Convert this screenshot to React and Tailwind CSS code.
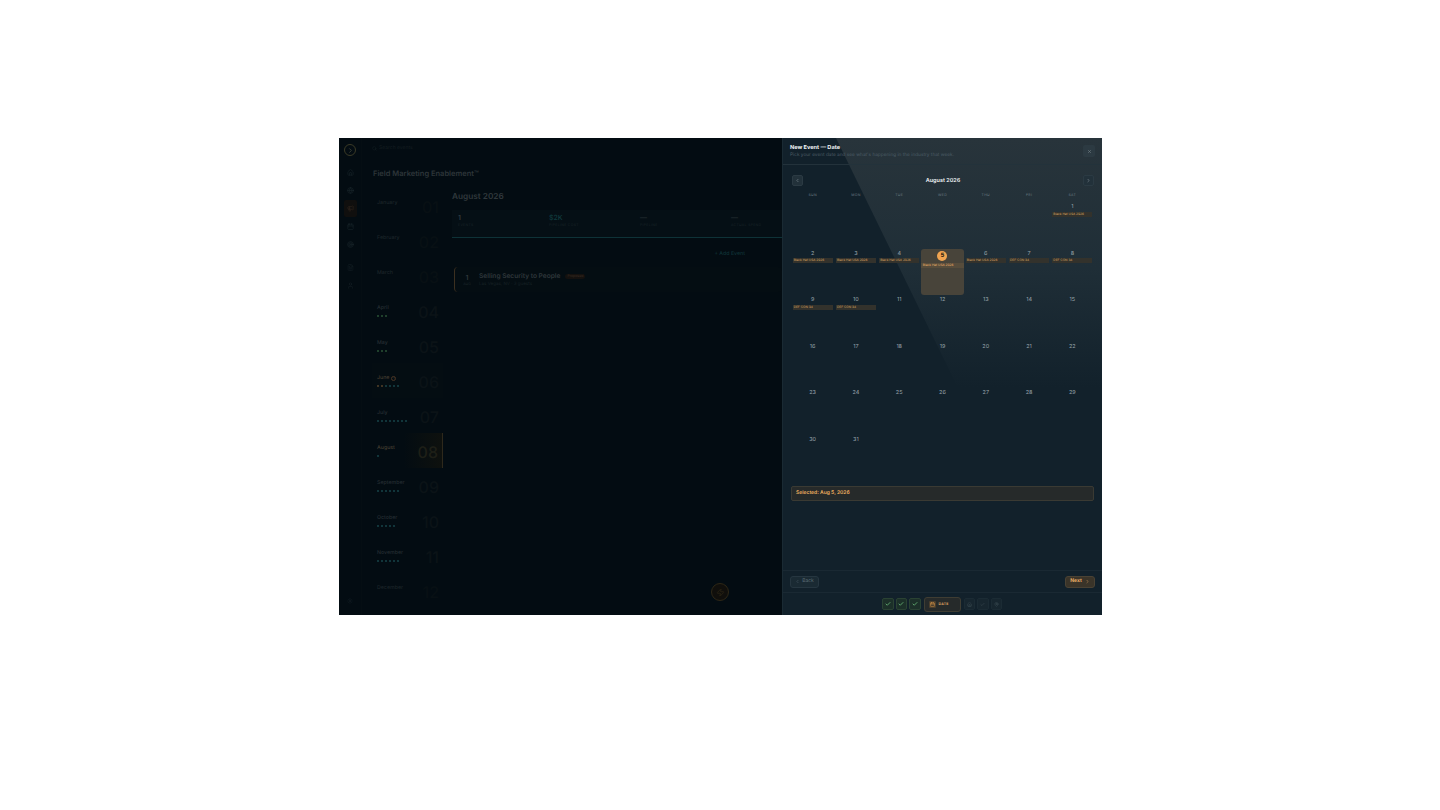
import React from 'react';
import { Search, Home, Globe, Megaphone, Calendar, Target, FileText, Settings, User, ChevronLeft, ChevronRight, X, Check, Zap, MapPin } from 'lucide-react';

const head = { fontFamily: 'Inter, "Liberation Sans", sans-serif' };

const months = [
  { n: 'January', d: '01', dots: [], dim: true },
  { n: 'February', d: '02', dots: [], dim: true },
  { n: 'March', d: '03', dots: [], dim: true },
  { n: 'April', d: '04', dots: ['g', 'g', 'g'] },
  { n: 'May', d: '05', dots: ['g', 'g', 'g'] },
  { n: 'June', d: '06', dots: ['o', 'o', 't', 't', 't', 't'], badge: true },
  { n: 'July', d: '07', dots: ['t', 't', 't', 't', 't', 't', 't', 't'] },
  { n: 'August', d: '08', dots: ['t'], active: true },
  { n: 'September', d: '09', dots: ['t', 't', 't', 't', 't', 't'] },
  { n: 'October', d: '10', dots: ['t', 't', 't', 't', 't'] },
  { n: 'November', d: '11', dots: ['t', 't', 't', 't', 't', 't'] },
  { n: 'December', d: '12', dots: [], dim: true },
];

const dotClass = { g: 'bg-[#2a5236]', o: 'bg-[#54422a]', t: 'bg-[#174349]' };

const railTop = [Home, Globe, Megaphone, Calendar, Target];
const railLow = [FileText, User];

function Rail() {
  return (
    <div className="w-[23px] shrink-0 flex flex-col items-center pt-[6px] border-r border-[#050e13]">
      <div className="w-[12px] h-[12px] rounded-full border border-[#3a3a26] flex items-center justify-center">
        <ChevronRight size={7} strokeWidth={3} className="text-[#3d4238]" />
      </div>
      <div className="flex flex-col items-center gap-[1px] mt-[8px]">
        {railTop.map((I, i) => (
          <div key={i} className={`w-[13px] h-[17px] flex items-center justify-center rounded-[2px] ${i === 2 ? 'bg-[#100f0e]' : ''}`}>
            <I size={7} className={i === 2 ? 'text-[#33281f]' : 'text-[#1a262b]'} />
          </div>
        ))}
      </div>
      <div className="flex flex-col items-center gap-[1px] mt-[6px]">
        {railLow.map((I, i) => (
          <div key={i} className="w-[13px] h-[17px] flex items-center justify-center">
            <I size={7} className="text-[#162126]" />
          </div>
        ))}
      </div>
      <div className="mt-auto mb-[11px]">
        <Settings size={6} className="text-[#162126]" />
      </div>
    </div>
  );
}

function MonthRow({ m }) {
  return (
    <div className={`h-[35px] shrink-0 relative flex items-start justify-between pl-[5px] pr-[4px] ${m.active ? 'bg-[linear-gradient(90deg,#030c12_45%,#0e110e)] border-r border-[#2e291c]' : ''} ${m.badge ? 'bg-[#040d12]' : ''}`}>
      <div className="flex flex-col gap-[3px] pt-[12px]">
        <div className={`text-[5.25px] leading-[7px] font-medium flex items-center gap-[2px] ${m.active || m.badge ? 'text-[#443d31]' : m.dim ? 'text-[#1c2529]' : 'text-[#262e32]'}`}>
          {m.n}
          {m.badge && <span className="w-[5px] h-[5px] rounded-full border border-[#4a3525] text-[3px] leading-[3px] flex items-center justify-center">1</span>}
        </div>
        {m.dots.length > 0 && (
          <div className="flex gap-[2px] h-[2px]">
            {m.dots.map((c, i) => <span key={i} className={`w-[2px] h-[2px] rounded-full ${dotClass[c]}`} />)}
          </div>
        )}
      </div>
      <div className={`text-[16px] leading-[16px] pt-[11px] box-content font-medium ${m.active ? 'text-[#1e1f17]' : m.dim ? 'text-[#081014]' : 'text-[#0b1317]'}`}>{m.d}</div>
    </div>
  );
}

const stats = [
  { v: '1', l: 'EVENTS', c: 'text-[#3a4246]' },
  { v: '$2K', l: 'PIPELINE COST', c: 'text-[#103b3e]' },
  { v: '—', l: 'PIPELINE', c: 'text-[#2a3438]' },
  { v: '—', l: 'ACTUAL SPEND', c: 'text-[#2a3438]' },
];

function Background() {
  return (
    <div className="flex-1 min-w-0 flex flex-col">
      <div className="h-[20px] shrink-0 flex items-center gap-[2px] pl-[10px] pt-[1px]">
        <Search size={5} className="text-[#172125]" />
        <span className="text-[5px] text-[#131c20]">Search events</span>
      </div>
      <div className="text-[7.5px] leading-[10px] font-semibold text-[#2d3539] pl-[11px] mt-[11px]">Field Marketing Enablement™</div>
      <div className="flex flex-1 min-h-0 mt-[9px]">
        <div className="w-[81px] shrink-0 overflow-hidden">
          <div className="flex flex-col pl-[10px]">
            {months.map(m => <MonthRow key={m.n} m={m} />)}
          </div>
        </div>
        <div className="flex-1 min-w-0 pl-[9px] flex flex-col">
          <div className="text-[8.25px] leading-[11px] font-semibold text-[#30383c] mt-[3px]">August 2026</div>
          <div className="mt-[8px] h-[28px] w-[370px] shrink-0 grid grid-cols-4 bg-[#050f15] border-b border-[#0e3237] pl-[6px]">
            {stats.map(s => (
              <div key={s.l} className="pt-[3px]">
                <div className={`text-[7px] leading-[9px] font-medium ${s.c}`}>{s.v}</div>
                <div className="text-[3.5px] leading-[5px] mt-[1px] tracking-[0.3px] text-[#192428]">{s.l}</div>
              </div>
            ))}
          </div>
          <div className="flex justify-end mt-[13px] pr-[37px] text-[5.25px] leading-[7px] font-medium text-[#0f3337]">+ Add Event</div>
          <div className="mt-[9px] ml-[2px] h-[25px] shrink-0 flex items-center rounded-[4px] border-l border-[#3c3020] bg-[#040d12]">
            <div className="w-[24px] shrink-0 flex flex-col items-center">
              <div className="text-[7px] leading-[9px] font-semibold text-[#30383c]">1</div>
              <div className="text-[3.5px] leading-[5px] text-[#1c262a]">AUG</div>
            </div>
            <div>
              <div className="flex items-center gap-[5px]">
                <span className="text-[6.6px] leading-[9px] font-semibold text-[#2e363a]">Selling Security to People</span>
                <span className="text-[3.5px] leading-[5px] px-[2px] rounded-full bg-[#14110f] text-[#3c2d22]">Proposed</span>
              </div>
              <div className="text-[4.5px] leading-[7px] text-[#172125]">Las Vegas, NV · 3 guests</div>
            </div>
          </div>
          <div className="mt-auto mb-[14px] ml-[259px] w-[18px] h-[18px] rounded-full border border-[#2e2716] bg-[#100f0c] flex items-center justify-center">
            <Zap size={9} className="text-[#2e2716]" />
          </div>
        </div>
      </div>
    </div>
  );
}

const blackHat = 'Black Hat USA 2026';
const defcon = 'DEF CON 34';
const weeks = [
  [null, null, null, null, null, null, { d: 1, e: blackHat }],
  [{ d: 2, e: blackHat }, { d: 3, e: blackHat }, { d: 4, e: blackHat }, { d: 5, e: blackHat, s: true }, { d: 6, e: blackHat }, { d: 7, e: defcon }, { d: 8, e: defcon }],
  [{ d: 9, e: defcon }, { d: 10, e: defcon }, { d: 11 }, { d: 12 }, { d: 13 }, { d: 14 }, { d: 15 }],
  [16, 17, 18, 19, 20, 21, 22].map(d => ({ d })),
  [23, 24, 25, 26, 27, 28, 29].map(d => ({ d })),
  [{ d: 30 }, { d: 31 }, null, null, null, null, null],
];

function Cell({ c }) {
  if (!c) return <div />;
  if (c.s) {
    return (
      <div className="rounded-[3px] bg-[#48443a] flex flex-col items-center pt-[2px]">
        <div className="w-[10px] h-[10px] rounded-full bg-[#f0a451] text-[#2a1d0e] text-[6px] leading-none font-bold flex items-center justify-center">{c.d}</div>
        <div className="w-full mt-[2px] h-[5px] bg-[#574d3c] text-[3.2px] leading-[5px] text-[#f0b46a] pl-[2px] whitespace-nowrap overflow-hidden">{c.e}</div>
      </div>
    );
  }
  return (
    <div className="flex flex-col items-center pt-[2px]">
      <div className="text-[5.5px] leading-[7px] text-[#9aa5ab]">{c.d}</div>
      {c.e && <div className="w-[40px] mt-[0.5px] h-[5px] bg-[#33322c] text-[3.2px] leading-[5px] text-[#dca662] pl-[1px] whitespace-nowrap overflow-hidden">{c.e}</div>}
    </div>
  );
}

function Panel() {
  const days = ['SUN', 'MON', 'TUE', 'WED', 'THU', 'FRI', 'SAT'];
  return (
    <div className="w-[320px] shrink-0 relative flex flex-col bg-[#12212b] border-l border-[#1a2a33]">
      <div className="absolute inset-0 pointer-events-none bg-[linear-gradient(180deg,#28343b_0px,#1f2e37_130px,#12212b_250px)] [clip-path:polygon(53px_0,100%_0,100%_300px,175px_250px)]" />
      <div className="relative flex flex-col flex-1 min-h-0">
        <div className="h-[27px] shrink-0 border-b border-[#23323b] flex items-center justify-between pl-[7px] pr-[7px]">
          <div>
            <div className="text-[5.6px] leading-[8px] font-bold text-[#f0f3f5]">New Event — Date</div>
            <div className="text-[4.75px] leading-[7px] text-[#4b5b64]">Pick your event date and see what's happening in the industry that week.</div>
          </div>
          <div className="w-[12px] h-[12px] rounded-[2px] bg-[#2c3a42] flex items-center justify-center">
            <X size={5} className="text-[#8a969c]" />
          </div>
        </div>
        <div className="px-[8px] flex flex-col flex-1 min-h-0">
          <div className="h-[11px] mt-[10px] shrink-0 flex items-center justify-between pl-[1px]">
            <div className="w-[11px] h-[11px] rounded-[2px] border border-[#2b3a43] bg-[#22313a] flex items-center justify-center"><ChevronLeft size={5} className="text-[#aab4ba]" /></div>
            <div className="text-[5.5px] leading-[8px] font-semibold text-[#f0f3f5]">August 2026</div>
            <div className="w-[11px] h-[11px] rounded-[2px] border border-[#2b3a43] bg-[#22313a] flex items-center justify-center"><ChevronRight size={5} className="text-[#aab4ba]" /></div>
          </div>
          <div className="grid grid-cols-7 mt-[6px] h-[6px] shrink-0">
            {days.map(d => <div key={d} className="text-center text-[3.5px] leading-[6px] tracking-[0.3px] text-[#6b7a82]">{d}</div>)}
          </div>
          <div className="grid grid-cols-7 grid-rows-6 mt-[4px] h-[279px] shrink-0">
            {weeks.flat().map((c, i) => <Cell key={i} c={c} />)}
          </div>
          <div className="mt-[5px] h-[15px] shrink-0 rounded-[2px] border border-[#3a3a33] bg-[#262a2a] flex items-center pl-[4px] text-[5px] font-semibold text-[#f0b060]">Selected: Aug 5, 2026</div>
        </div>
        <div className="h-[22px] shrink-0 border-t border-[#1a2933] flex items-center justify-between px-[7px]">
          <div className="h-[12px] w-[29px] rounded-[3px] border border-[#263640] bg-[#1a2a33] flex items-center justify-center gap-[2px] text-[5px] text-[#5d6c75]">
            <ChevronLeft size={5} /> Back
          </div>
          <div className="h-[12px] w-[30px] rounded-[3px] border border-[#4a4234] bg-[#3a3429] flex items-center justify-center gap-[3px] text-[5px] font-bold text-[#e8ad66]">
            Next <ChevronRight size={5} />
          </div>
        </div>
        <div className="h-[23px] shrink-0 border-t border-[#1a2933] flex items-center justify-center gap-[2px] pr-[1px]">
          {[0, 1, 2].map(i => (
            <div key={i} className="w-[11.5px] h-[12px] rounded-[2px] border border-[#2a4233] bg-[#1c3029] flex items-center justify-center">
              <Check size={6} strokeWidth={3} className="text-[#6fc27f]" />
            </div>
          ))}
          <div className="w-[37px] h-[15px] rounded-[3px] border border-[#3f3d33] bg-[#262a2a] flex items-center gap-[3px] pl-[4px] mx-[1px]">
            <div className="w-[7px] h-[7px] rounded-[1px] bg-[#4a3e2c] flex items-center justify-center"><Calendar size={5} className="text-[#f0a451]" /></div>
            <span className="text-[3.5px] leading-[5px] font-semibold text-[#e8ad66] tracking-[0.3px]">DATE</span>
          </div>
          {[Home, Check, MapPin].map((I, i) => (
            <div key={i} className="w-[11.5px] h-[12px] rounded-[2px] border border-[#1b2b34] bg-[#17262f] flex items-center justify-center">
              <I size={5} className="text-[#45545c]" />
            </div>
          ))}
        </div>
      </div>
    </div>
  );
}

export default function App() {
  return (
    <div className="min-h-[810px] bg-white pt-[138px] pl-[339px] [text-rendering:geometricPrecision]" style={head}>
      <div className="w-[763px] h-[477px] flex bg-[#030c12] overflow-hidden">
        <div className="w-[443px] shrink-0 flex bg-[#030c12]">
          <Rail />
          <Background />
        </div>
        <Panel />
      </div>
    </div>
  );
}
